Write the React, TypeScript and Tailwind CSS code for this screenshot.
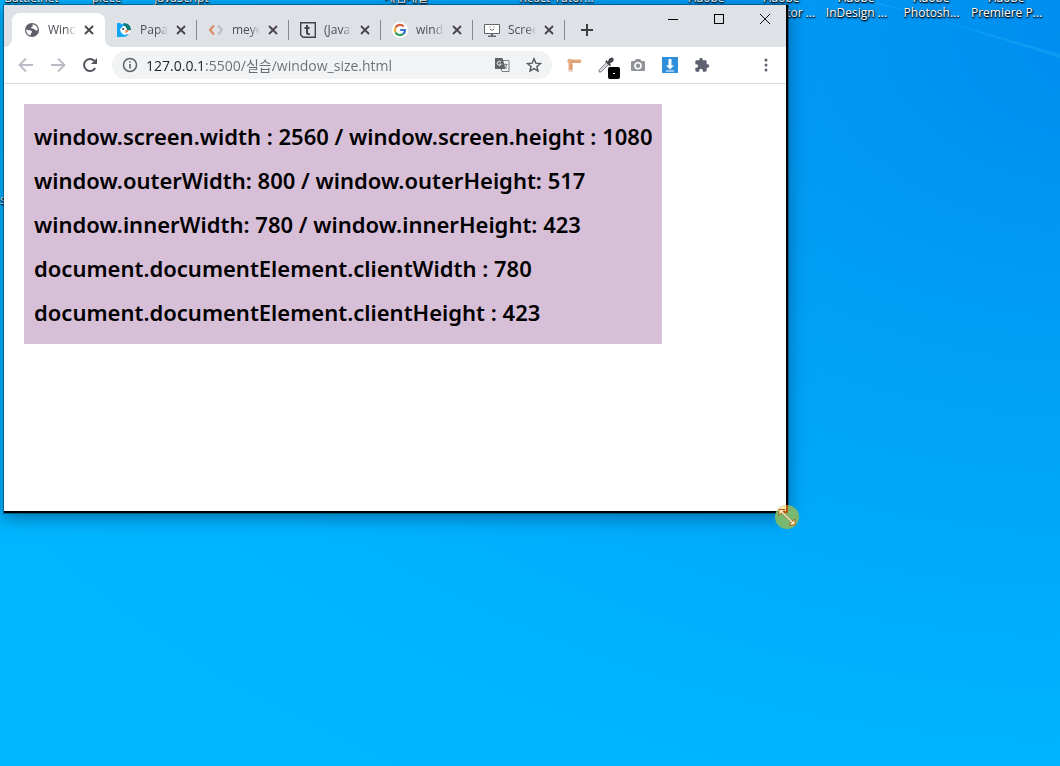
import React from "react";

const ui = "font-['Open_Sans','Noto_Sans_CJK_KR',sans-serif]";

function GlobeIcon() {
  return (
    <svg viewBox="0 0 16 16" className="h-4 w-4 shrink-0" aria-hidden="true">
      <circle cx="8" cy="8" r="7" fill="#5f5f6c" />
      <path d="M2.300 7.500 4.500 8.200 7 8.500 8.200 10 6.800 11.500 6.500 13.600C4 13 2.300 11 2.300 8.300ZM8.500 2.300c2.600.2 4.700 2.100 5.200 4.700l-.6 1.700-2.300-.6-.8-1.600-2 .2L7 5.200l1.900-1Z" fill="#fff" />
    </svg>
  );
}

function PapagoIcon() {
  return (
    <svg viewBox="0 0 16 16" className="h-4 w-4 shrink-0" aria-hidden="true">
      <path d="M1 1h3l2 1.500L9 1v3L5 8l2 4h6l-3 2.500-4 .5H1Z" fill="#12a5f4" />
      <path d="M7 1.500C12 .5 15 4 15 8H11L9 4.500Z" fill="#0a7c70" />
      <path d="M4 7.500 7 4l2.500.5L11 8l3 1-1.500 3L8 13l-3-2.500Z" fill="#fff" />
      <path d="M9 8h4.500L10 11.500Z" fill="#ef8a50" />
      <circle cx="7.200" cy="7" r="1" fill="#23364d" />
    </svg>
  );
}

function CodeIcon() {
  return (
    <svg viewBox="0 0 16 16" className="h-4 w-4 shrink-0" fill="none" strokeWidth="2" aria-hidden="true">
      <path d="M6 3.500 2 8l4 4.500" stroke="#d98a62" />
      <path d="M10 3.500 14 8l-4 4.500" stroke="#b9bcc6" />
    </svg>
  );
}

function LetterIcon() {
  return (
    <svg viewBox="0 0 16 16" className="h-4 w-4 shrink-0" fill="none" stroke="#43434b" aria-hidden="true">
      <path d="M1 .7h14.300v14.600H3L.7 13V.7Z" strokeWidth="1.400" />
      <path d="M7 3v7.500c0 1.500 1 1.800 2.800 1.500M4.500 6h5" strokeWidth="2" />
    </svg>
  );
}

function GoogleIcon() {
  return (
    <svg viewBox="0 0 16 16" className="h-4 w-4 shrink-0" aria-hidden="true">
      <circle cx="8" cy="8" r="8" fill="#fff" />
      <g fill="none" strokeWidth="2.200">
        <path d="M11.700 4.400A5.100 5.100 0 0 0 3.500 5.600" stroke="#d9603c" />
        <path d="M3.500 5.600a5.100 5.100 0 0 0 0 4.800" stroke="#eeb03a" />
        <path d="M3.500 10.400a5.100 5.100 0 0 0 7.900 1.400" stroke="#2b9a5c" />
        <path d="M11.400 11.800C12.600 10.800 13.100 9.500 13 8H8.200" stroke="#3c72cf" />
      </g>
    </svg>
  );
}

function ScreenIcon() {
  return (
    <svg viewBox="0 0 16 16" className="h-4 w-4 shrink-0" aria-hidden="true">
      <path d="M.5 2.500h15v9H.5Z" fill="#fff" stroke="#66666e" />
      <path d="M7 12h2v1.500h3V15H4v-1.500h3Z" fill="#66666e" />
      <path d="M6 4.500v1M10 4.500v1M6 7l1 1h2l1-1" stroke="#66666e" fill="none" />
    </svg>
  );
}

function CloseIcon() {
  return (
    <svg viewBox="0 0 10 10" className="h-2.5 w-2.5" aria-hidden="true">
      <path d="m1 1 8 8M9 1 1 9" stroke="#4a434b" strokeWidth="1.800" />
    </svg>
  );
}

const tabs = [
  { title: "Window Size", icon: <GlobeIcon /> },
  { title: "Papago", icon: <PapagoIcon /> },
  { title: "meyerweb", icon: <CodeIcon /> },
  { title: "(JavaScript)", icon: <LetterIcon /> },
  { title: "window size", icon: <GoogleIcon /> },
  { title: "Screen", icon: <ScreenIcon /> },
];

function TabFoot({ flip }: { flip?: boolean }) {
  return (
    <svg
      viewBox="0 0 8 8"
      aria-hidden="true"
      className={flip ? "absolute bottom-0 left-full h-2 w-2 -scale-x-100" : "absolute right-full bottom-0 h-2 w-2"}
    >
      <path d="M8 0v8H0a8 8 0 0 0 8-8Z" fill="#fff" />
    </svg>
  );
}

function TabStrip() {
  return (
    <div className="flex h-[42px] items-start bg-[#dee1e6]">
      <div role="tablist" className="flex pt-2 pl-2">
        {tabs.map((tab, i) => (
          <div
            key={tab.title}
            role="tab"
            aria-selected={i === 0}
            className={
              i === 0
                ? "relative flex h-[34px] w-[93px] items-center rounded-t-lg bg-white pl-3"
                : "relative flex h-[34px] w-[92px] items-center pl-[11px]"
            }
          >
            {i === 0 && <TabFoot />}
            {i === 0 && <TabFoot flip />}
            {tab.icon}
            <span className="ml-2 w-7 overflow-hidden text-xs whitespace-nowrap text-[#4d5156] [mask-image:linear-gradient(to_right,#000_65%,transparent)]">
              {tab.title}
            </span>
            <button type="button" aria-label={"Close " + tab.title} className="ml-2 flex h-4 w-2.5 items-center">
              <CloseIcon />
            </button>
            {i > 0 && <span className="absolute top-[7px] right-0 h-5 w-px bg-[#85888c]" />}
          </div>
        ))}
      </div>
      <button type="button" aria-label="New tab" className="mt-2 flex h-[34px] w-11 items-center justify-center">
        <svg viewBox="0 0 12 12" className="h-3 w-3" aria-hidden="true">
          <path d="M6 0v12M0 6h12" stroke="#3c4043" strokeWidth="2" />
        </svg>
      </button>
      <div className="-mr-0.5 ml-auto flex">
        <button type="button" aria-label="Minimize" className="flex h-7 w-[46px] items-center justify-center">
          <svg viewBox="0 0 10 10" className="h-2.5 w-2.5" shapeRendering="crispEdges" aria-hidden="true">
            <path d="M0 5.500h10" stroke="#000" />
          </svg>
        </button>
        <button type="button" aria-label="Maximize" className="flex h-7 w-[46px] items-center justify-center">
          <svg viewBox="0 0 10 10" className="h-2.5 w-2.5" shapeRendering="crispEdges" aria-hidden="true">
            <path d="M.5.5h9v9h-9Z" fill="none" stroke="#000" />
          </svg>
        </button>
        <button type="button" aria-label="Close" className="flex h-7 w-[46px] items-center justify-center">
          <svg viewBox="0 0 10 10" className="h-2.5 w-2.5" aria-hidden="true">
            <path d="m0 0 10 10M10 0 0 10" stroke="#101020" />
          </svg>
        </button>
      </div>
    </div>
  );
}

function IconButton({ label, children }: { label: string; children: React.ReactNode }) {
  return (
    <button type="button" aria-label={label} className="flex h-7 w-8 shrink-0 items-center justify-center">
      {children}
    </button>
  );
}

function Toolbar() {
  return (
    <div className="flex h-[37px] items-center border-b border-[#dadce0] bg-white pl-1.5">
      <IconButton label="Back">
        <svg viewBox="0 0 16 16" className="h-4 w-4" fill="none" stroke="#babac4" strokeWidth="1.800" aria-hidden="true">
          <path d="M15 8H2M8 1.500 1.500 8 8 14.500" />
        </svg>
      </IconButton>
      <IconButton label="Forward">
        <svg viewBox="0 0 16 16" className="h-4 w-4" fill="none" stroke="#babac4" strokeWidth="1.800" aria-hidden="true">
          <path d="M1 8h13M8 1.500 14.500 8 8 14.500" />
        </svg>
      </IconButton>
      <IconButton label="Reload">
        <svg viewBox="0 0 16 16" className="h-4 w-4" aria-hidden="true">
          <path d="M13.200 11A6 6 0 1 1 12.300 3.800" fill="none" stroke="#55555e" strokeWidth="2" />
          <path d="M15 1v6H9Z" fill="#55555e" />
        </svg>
      </IconButton>
      <div className="ml-1.5 flex h-7 flex-1 items-center rounded-full bg-[#f1f3f4] pl-2.5">
        <svg viewBox="0 0 16 16" className="h-4 w-4 shrink-0" aria-hidden="true">
          <circle cx="8" cy="8" r="6.500" fill="none" stroke="#5f6368" strokeWidth="1.500" />
          <path d="M7.200 7h1.600v4.500H7.200ZM7.200 4.200h1.600v1.600H7.200Z" fill="#5f6368" />
        </svg>
        <input
          aria-label="Address"
          defaultValue="127.0.0.1:5500/실습/window_size.html"
          className="ml-2 h-6 min-w-0 flex-1 bg-[linear-gradient(to_right,#202124_60px,#6a6e73_60px)] bg-clip-text text-sm text-transparent outline-none"
        />
        <IconButton label="Translate">
          <svg viewBox="0 0 16 16" className="h-4 w-4" aria-hidden="true">
            <path d="M5 3.500h10v11H8Z" fill="#f1f3f4" stroke="#7b7e86" />
            <path d="M1 1h7.500l3 11H1Z" fill="#5f6368" />
            <path d="M7 5.200A2 2 0 1 0 7.200 7H5.500" fill="none" stroke="#fff" />
            <path d="M9.500 7.500h4M11.500 6.500v1M12.800 7.500c-.5 2-1.500 3-2.500 4M10.500 9l2.500 3" fill="none" stroke="#7b7e86" />
          </svg>
        </IconButton>
        <IconButton label="Bookmark">
          <svg viewBox="0 0 16 16" className="h-4 w-4" aria-hidden="true">
            <path d="m8 1.800 1.800 4.300 4.700.4-3.600 3 1.100 4.600-4-2.500-4 2.500 1.100-4.600-3.600-3 4.700-.4Z" fill="none" stroke="#55555e" strokeWidth="1.400" />
          </svg>
        </IconButton>
        <span className="w-0.5" />
      </div>
      <div className="ml-1.5 flex">
        <IconButton label="Page ruler">
          <svg viewBox="0 0 16 16" className="h-4 w-4" aria-hidden="true">
            <path d="M1.500 3 3 1.500 6 2.500h9v3.500H6.500v7.500h-4V6L1.500 5Z" fill="#e6aa80" />
            <path d="M6.500 3v3M4.500 8h2M4.500 10h2M4.500 12h2M9 4.500V6M11 4.500V6M13 4.500V6" stroke="#c98858" strokeWidth=".7" />
            <path d="M2.500 14.500h5" stroke="#ddd" />
          </svg>
        </IconButton>
        <IconButton label="Color picker">
          <span className="relative">
            <svg viewBox="0 0 16 16" className="h-4 w-4" aria-hidden="true">
              <path d="M1 15v-2l7.500-7.500 2 2L3 15Z" fill="#d9dbe0" stroke="#85858e" />
              <path d="m7 4.500 1.500-1.200L10 4.500 11 2q2-2.500 4-1 1.500 2-.5 4L12 6.500l1 1.500-1.200 1.200Z" fill="#45454d" />
            </svg>
            <span className="absolute top-2.5 left-2.5 flex h-3 w-3 items-center justify-center rounded-xs bg-black">
              <span className="h-px w-0.5 bg-white" />
            </span>
          </span>
        </IconButton>
        <IconButton label="Screenshot">
          <svg viewBox="0 0 16 16" className="h-4 w-4" aria-hidden="true">
            <path d="M2 4h2.500L6 2h4l1.500 2H14a1 1 0 0 1 1 1v8a1 1 0 0 1-1 1H2a1 1 0 0 1-1-1V5a1 1 0 0 1 1-1Z" fill="#909398" />
            <circle cx="8" cy="8.800" r="3" fill="none" stroke="#fff" strokeWidth="1.600" />
          </svg>
        </IconButton>
        <IconButton label="Downloads">
          <svg viewBox="0 0 16 16" className="h-4 w-4" aria-hidden="true">
            <path d="M0 0h16v16H0Z" fill="#2e8fdc" />
            <path d="M6.500 2h3v6.500H12L8 12.500 4 8.500h2.500ZM4 13.500h8v1H4Z" fill="#fff" />
          </svg>
        </IconButton>
        <IconButton label="Extensions">
          <svg viewBox="0 0 24 24" className="h-4 w-4" fill="#5f6070" aria-hidden="true">
            <path d="M20.500 11H19V7c0-1.100-.9-2-2-2h-4V3.500a2.500 2.500 0 0 0-5 0V5H4c-1.100 0-2 .9-2 2v3.800h1.500a2.700 2.700 0 0 1 0 5.400H2V20c0 1.100.9 2 2 2h3.800v-1.500a2.700 2.700 0 0 1 5.400 0V22H17c1.100 0 2-.9 2-2v-4h1.500a2.500 2.500 0 0 0 0-5Z" />
          </svg>
        </IconButton>
      </div>
      <div className="ml-8 pr-1">
        <IconButton label="Menu">
          <svg viewBox="0 0 16 16" className="h-4 w-4" fill="#5f6070" aria-hidden="true">
            <circle cx="8" cy="3" r="1.500" />
            <circle cx="8" cy="8" r="1.500" />
            <circle cx="8" cy="13" r="1.500" />
          </svg>
        </IconButton>
      </div>
    </div>
  );
}

const lines = [
  "window.screen.width : 2560 / window.screen.height : 1080",
  "window.outerWidth: 800 / window.outerHeight: 517",
  "window.innerWidth: 780 / window.innerHeight: 423",
  "document.documentElement.clientWidth : 780",
  "document.documentElement.clientHeight : 423",
];

const shortcuts = [
  ["Battle.net"],
  ["piece"],
  ["JavaScript"],
  [],
  [],
  ["게임개발"],
  [],
  ["React-Tutor..."],
  [],
  ["Adobe"],
  ["Adobe", "Illustrator ..."],
  ["Adobe", "InDesign ..."],
  ["Adobe", "Photosh..."],
  ["Adobe", "Premiere P..."],
];

export default function App() {
  return (
    <div
      className={
        "relative min-h-screen overflow-hidden bg-[radial-gradient(ellipse_at_105%_5%,#008cee_0%,#0097f4_18%,#00a0f6_32%,#00a9fb_50%,#00b4ff_70%,#00b8ff_100%)] " + ui
      }
    >
      <svg viewBox="0 0 230 70" className="absolute top-0 right-0 h-[70px] w-[230px]" aria-hidden="true">
        <path d="M40 0 230 54v4L90 14 30 0Z" fill="#2aaef8" opacity=".35" />
      </svg>

      <div className="absolute -top-2.5 -left-1.5 grid w-max grid-cols-[repeat(14,75px)] text-center text-xs leading-[15px] whitespace-nowrap text-white [text-shadow:1px_1px_2px_#000,0_1px_1px_#000]">
        {shortcuts.map((rows, i) => (
          <div key={i} className="flex flex-col items-center">
            {rows.map((row) => (
              <span key={row}>{row}</span>
            ))}
          </div>
        ))}
      </div>
      <span className="absolute top-48 left-0 text-xs leading-[15px] text-white [text-shadow:1px_1px_2px_#000,0_1px_1px_#000]">
        s
      </span>

      <main className="absolute top-[5px] left-1 flex h-[508px] w-[784px] flex-col border-r-2 border-b-2 border-black bg-white shadow-[0_0_0_1px_rgba(0,50,90,0.5),0_4px_16px_1px_rgba(0,50,90,0.5)]">
        <TabStrip />
        <Toolbar />
        <div className="flex-1 p-5">
          <div className="w-fit bg-[#d8bfd8] p-2.5 font-['Noto_Sans',sans-serif] text-[22px] leading-[44px] font-semibold whitespace-nowrap text-black">
            {lines.map((line) => (
              <p key={line}>{line}</p>
            ))}
          </div>
        </div>
      </main>

      <svg viewBox="0 0 24 24" className="absolute top-[505px] left-[775px] h-6 w-6" aria-hidden="true">
        <circle cx="12" cy="12" r="12" fill="#78b870" />
        <path d="M3 4.500A12 12 0 0 1 11 0v6H1.500Z" fill="#fbe9b0" />
        <path d="M12 0v8M4 7h9" stroke="#b8570c" strokeWidth="2" />
        <path d="m7 7 10 10" stroke="#8a6a28" strokeWidth="2.400" />
        <path d="M4 4.500h6l-6 6ZM20 20h-6l6-6Z" fill="#fff3d0" stroke="#b05a10" />
        <path d="m7 7 10 10" stroke="#fff3d0" strokeWidth="1.400" />
      </svg>
    </div>
  );
}
